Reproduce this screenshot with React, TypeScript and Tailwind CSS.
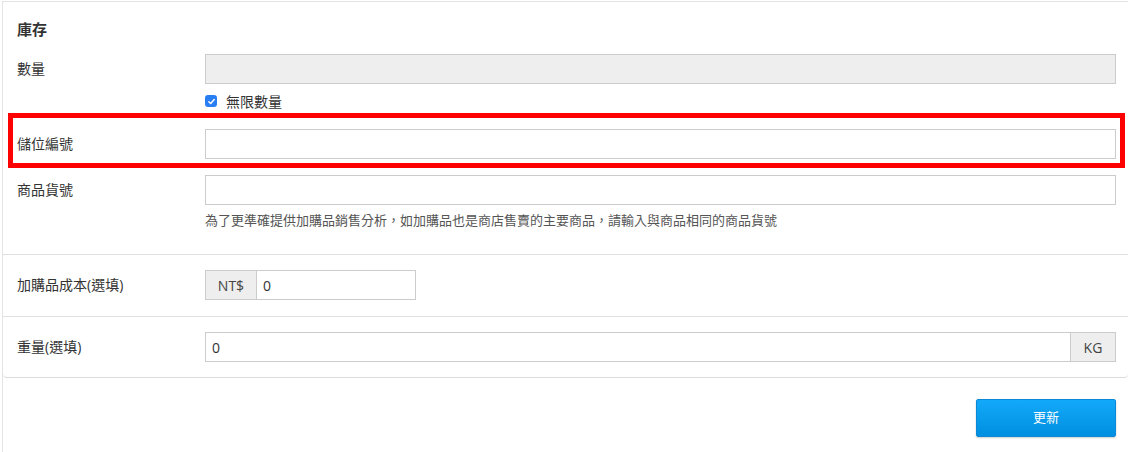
import React from "react";

const FONT = "font-['Open_Sans','Noto_Sans_CJK_TC',sans-serif]";

function Label({ children }: { children: React.ReactNode }) {
  return <div className="w-[188px] shrink-0 pt-[5px] leading-5 text-[14px] text-[#333]">{children}</div>;
}

function TextInput({ value = "", disabled = false }: { value?: string; disabled?: boolean }) {
  return (
    <div
      className={`h-[30px] w-full shrink-0 border border-[#ccc] px-[6px] flex items-center text-[14px] text-[#333] ${
        disabled ? "bg-[#eeeeee]" : "bg-white"
      }`}
    >
      {value}
    </div>
  );
}

export default function App() {
  return (
    <div className={`w-[1128px] h-[452px] bg-white pl-[2px] pt-[1px] ${FONT}`}>
      <div className="h-full border-l border-t border-[#e3e3e3] bg-white">
        <div className="relative border-b border-[#dcdcdc] rounded-b-[4px]">
          {/* Inventory section */}
          <div className="pl-[14px] pr-[12px] pt-[17px] pb-[25px] border-b border-[#e0e0e0]">
            <div className="text-[15px] leading-5 font-semibold text-[#333] mb-[15px]">庫存</div>

            <div className="flex">
              <Label>數量</Label>
              <div className="flex-1 flex flex-col">
                <TextInput disabled />
                <div className="flex items-center gap-[9px] mt-[7px] h-5">
                  <span className="w-[12px] h-[12px] rounded-[3px] bg-[#2a7ef4] flex items-center justify-center">
                    <svg width="9" height="9" viewBox="0 0 10 10" fill="none">
                      <path d="M2 5.2 L4.1 7.2 L8 2.8" stroke="white" strokeWidth="1.6" strokeLinecap="round" strokeLinejoin="round" />
                    </svg>
                  </span>
                  <span className="text-[14px] text-[#333]">無限數量</span>
                </div>
              </div>
            </div>

            <div className="flex mt-[18px]">
              <Label>儲位編號</Label>
              <div className="flex-1">
                <TextInput />
              </div>
            </div>

            <div className="flex mt-[16px]">
              <Label>商品貨號</Label>
              <div className="flex-1 flex flex-col">
                <TextInput />
                <div className="mt-[6px] text-[13px] leading-[18px] text-[#555]">
                  為了更準確提供加購品銷售分析，如加購品也是商店售賣的主要商品，請輸入與商品相同的商品貨號
                </div>
              </div>
            </div>
          </div>

          {/* Cost */}
          <div className="flex pl-[14px] pr-[12px] pt-[15px] pb-[16px] border-b border-[#e0e0e0]">
            <Label>加購品成本(選填)</Label>
            <div className="flex h-[30px] w-[211px] border border-[#ccc]">
              <div className="w-[51px] bg-[#eeeeee] border-r border-[#ccc] flex items-center justify-center text-[14px] text-[#444]">
                NT$
              </div>
              <div className="flex-1 flex items-center px-[6px] text-[14px] text-[#333]">0</div>
            </div>
          </div>

          {/* Weight */}
          <div className="flex pl-[14px] pr-[12px] py-[15px]">
            <Label>重量(選填)</Label>
            <div className="flex flex-1 h-[30px] border border-[#ccc]">
              <div className="flex-1 flex items-center px-[6px] text-[14px] text-[#333]">0</div>
              <div className="w-[45px] bg-[#eeeeee] border-l border-[#ccc] flex items-center justify-center text-[14px] text-[#444]">
                KG
              </div>
            </div>
          </div>

          {/* annotation highlight */}
          <div className="absolute left-[5px] top-[111px] w-[1117px] h-[55px] border-[5px] border-[#ff0000] pointer-events-none" />
        </div>

        <div className="flex justify-end pr-[12px] pt-[21px]">
          <button className="w-[140px] h-[38px] rounded-[2px] border border-[#0b88d6] bg-gradient-to-b from-[#13a9fa] to-[#008fe0] text-white text-[13px] shadow-[0_1px_2px_rgba(0,0,0,0.2)]">
            更新
          </button>
        </div>
      </div>
    </div>
  );
}
